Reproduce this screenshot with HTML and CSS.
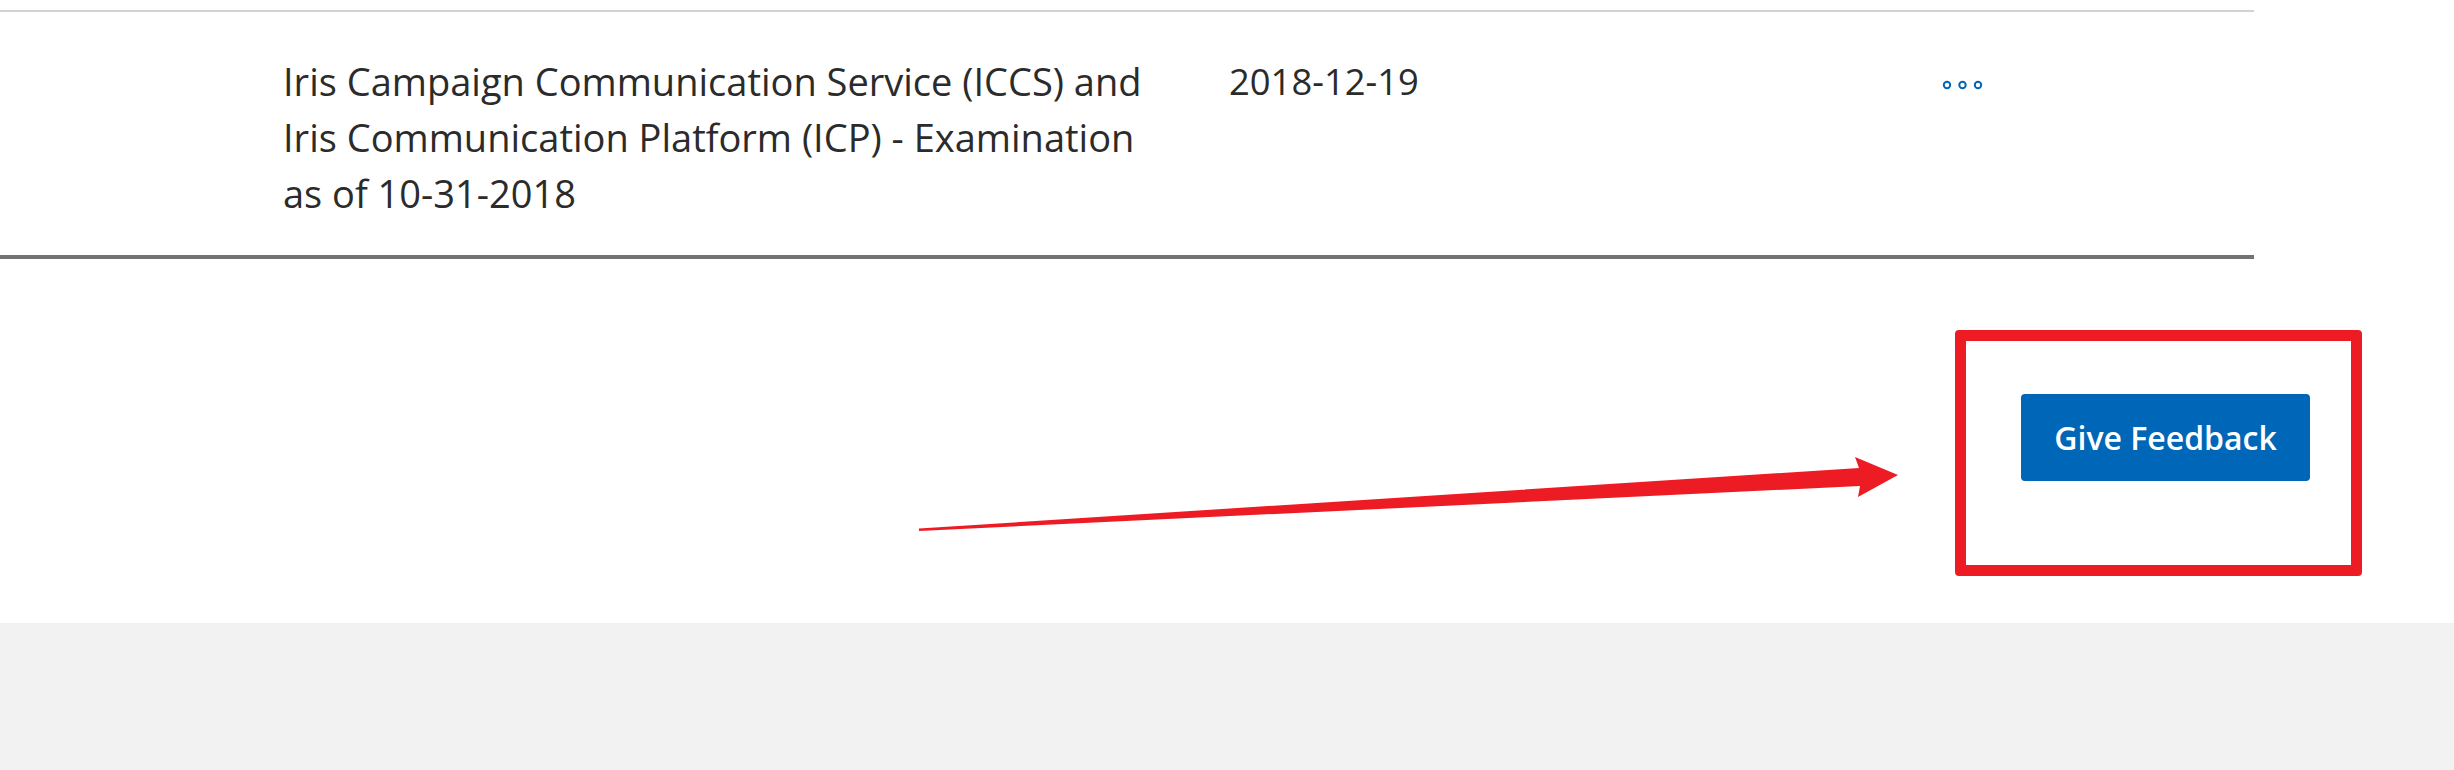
FILE: index.html
```html
<!DOCTYPE html>
<html lang="en">
<head>
    <meta charset="UTF-8">
    <meta name="viewport" content="width=device-width, initial-scale=1.0">
    <title>Documents</title>
    <link rel="stylesheet" href="styles.css">
</head>
<body>
    <div class="page">
        <div class="docs">
            <div class="doc-row">
                <div class="doc-icon"></div>
                <div class="doc-name">Iris Campaign Communication Service (ICCS) and Iris Communication Platform (ICP) - Examination as of 10-31-2018</div>
                <div class="doc-date">2018-12-19</div>
                <div class="doc-actions">
                    <button class="more" aria-label="More actions">
                        <svg width="44" height="12" viewBox="0 0 44 12">
                            <circle cx="5" cy="6" r="3.2" fill="none" stroke="#0067b8" stroke-width="2"/>
                            <circle cx="20.5" cy="6" r="3.2" fill="none" stroke="#0067b8" stroke-width="2"/>
                            <circle cx="36" cy="6" r="3.2" fill="none" stroke="#0067b8" stroke-width="2"/>
                        </svg>
                    </button>
                </div>
            </div>
        </div>

        <div class="feedback">
            <button class="feedback-button">Give Feedback</button>
        </div>

        <div class="footer"></div>

        <!-- annotation drawn over the screenshot -->
        <svg class="annotation-arrow" width="2454" height="770" viewBox="0 0 2454 770">
            <polygon points="919,528.5 1859,468 1855,457 1898,475 1858,497 1860,486 919,531" fill="#ed1c24"/>
        </svg>
        <div class="annotation-box"></div>
    </div>
</body>
</html>
```

FILE: styles.css
```css
body {
    margin: 0;
    font-family: "Open Sans", "Noto Sans", Arial, sans-serif;
    color: #2b2b2b;
    background-color: #fff;
}
.page {
    position: relative;
    width: 2454px;
    height: 770px;
    overflow: hidden;
    display: flex;
    flex-direction: column;
}
.docs {
    padding-top: 10px;
    width: 2254px;
}
.doc-row {
    display: grid;
    grid-template-columns: 283px 946px 714px 1fr;
    border-top: 2px solid #d2d2d2;
    border-bottom: 4px solid #737373;
    padding: 41px 0 34px;
    font-size: 38px;
    line-height: 56px;
}
.doc-name {
    max-width: 875px;
}
.doc-date {
    font-size: 36.4px;
}
.doc-actions {
    display: flex;
    align-items: flex-start;
}
.more {
    border: none;
    background: none;
    padding: 0;
    margin: 26px 0 0 -1px;
    cursor: pointer;
    line-height: 0;
}
.feedback {
    height: 364px;
    display: flex;
    justify-content: flex-end;
    align-items: flex-start;
    padding-right: 144px;
    box-sizing: border-box;
}
.feedback-button {
    margin-top: 135px;
    width: 289px;
    height: 87px;
    border: none;
    border-radius: 4px;
    background-color: #0067b8;
    color: #fff;
    font-family: "Open Sans", "Noto Sans", Arial, sans-serif;
    font-weight: 600;
    font-size: 32px;
    cursor: pointer;
}
.footer {
    flex: 1;
    background-color: #f2f2f2;
}
.annotation-arrow {
    position: absolute;
    left: 0;
    top: 0;
    pointer-events: none;
}
.annotation-box {
    position: absolute;
    left: 1955px;
    top: 330px;
    width: 407px;
    height: 246px;
    box-sizing: border-box;
    border: 11px solid #ed1c24;
    border-radius: 4px;
    pointer-events: none;
}
```
